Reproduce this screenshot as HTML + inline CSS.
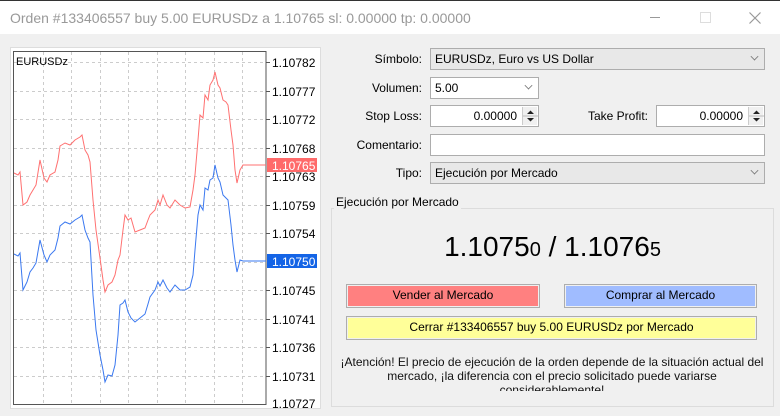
<!DOCTYPE html>
<html><head><meta charset="utf-8">
<style>
*{margin:0;padding:0;box-sizing:border-box}
body{width:780px;height:416px;overflow:hidden;background:#f0f0f0;font-family:"Liberation Sans",sans-serif;font-size:12px;color:#000;position:relative}
.title{position:absolute;left:0;top:0;width:780px;height:34px;background:#fff;border-top:1px solid #333}
.title span{position:absolute;left:10px;top:9px;font-size:14px;color:#999}
.abs{position:absolute}
.lbl{position:absolute;text-align:right;width:120px;font-size:12px}
.box{position:absolute;border:1px solid #adadad;background:#fff;height:22px;font-size:12px;padding:3px 4px}
.combo{background:#e8e8e8}
.chev{position:absolute;right:6px;top:4px;width:7px;height:7px;border-right:1px solid #777;border-bottom:1px solid #777;transform:rotate(45deg) scale(.8)}
.spin{position:absolute;right:1px;top:1px;width:15px;height:18px;background:#f0f0f0;border-left:1px solid #ccc}
.btn{position:absolute;border:1px solid #adadad;text-align:center;font-size:12px;line-height:19px}
.btn div{position:absolute;left:1px;top:1px;right:1px;bottom:1px}
</style></head><body>
<div class="title"><span>Orden #133406557 buy 5.00 EURUSDz a 1.10765 sl: 0.00000 tp: 0.00000</span>
<div class="abs" style="left:650px;top:16px;width:10px;height:1px;background:#999"></div>
<div class="abs" style="left:700px;top:11px;width:11px;height:11px;border:1px solid #ddd"></div>
<svg class="abs" style="left:749px;top:11px" width="12" height="12"><path d="M0.5 0.5L11.5 11.5M11.5 0.5L0.5 11.5" stroke="#999" stroke-width="1.2"/></svg>
</div>

<div class="abs" style="left:10px;top:47px;width:311px;height:362px;background:#fff;border:1px solid #ddd"></div>
<svg class="abs" style="left:0;top:0" width="330" height="416">
<rect x="13.5" y="51.5" width="252.5" height="353" fill="none" stroke="#555" stroke-width="1"/>
<g stroke="#ccc" stroke-dasharray="3,3" stroke-width="1">
<line x1="43.5" y1="52" x2="43.5" y2="404"/><line x1="71.5" y1="52" x2="71.5" y2="404"/><line x1="100.5" y1="52" x2="100.5" y2="404"/><line x1="128.5" y1="52" x2="128.5" y2="404"/><line x1="157.5" y1="52" x2="157.5" y2="404"/><line x1="185.5" y1="52" x2="185.5" y2="404"/><line x1="214.5" y1="52" x2="214.5" y2="404"/><line x1="242.5" y1="52" x2="242.5" y2="404"/>
<line x1="14" y1="62.5" x2="266" y2="62.5"/><line x1="14" y1="91.5" x2="266" y2="91.5"/><line x1="14" y1="119.5" x2="266" y2="119.5"/><line x1="14" y1="148.5" x2="266" y2="148.5"/><line x1="14" y1="176.5" x2="266" y2="176.5"/><line x1="14" y1="205.5" x2="266" y2="205.5"/><line x1="14" y1="233.5" x2="266" y2="233.5"/><line x1="14" y1="262.5" x2="266" y2="262.5"/><line x1="14" y1="290.5" x2="266" y2="290.5"/><line x1="14" y1="319.5" x2="266" y2="319.5"/><line x1="14" y1="347.5" x2="266" y2="347.5"/><line x1="14" y1="376.5" x2="266" y2="376.5"/>
</g>
<g stroke="#555"><line x1="266" y1="62.5" x2="270" y2="62.5"/><line x1="266" y1="91.5" x2="270" y2="91.5"/><line x1="266" y1="119.5" x2="270" y2="119.5"/><line x1="266" y1="148.5" x2="270" y2="148.5"/><line x1="266" y1="176.5" x2="270" y2="176.5"/><line x1="266" y1="205.5" x2="270" y2="205.5"/><line x1="266" y1="233.5" x2="270" y2="233.5"/><line x1="266" y1="290.5" x2="270" y2="290.5"/><line x1="266" y1="319.5" x2="270" y2="319.5"/><line x1="266" y1="347.5" x2="270" y2="347.5"/><line x1="266" y1="376.5" x2="270" y2="376.5"/></g>
<polyline fill="none" stroke="#ff7070" stroke-width="1" points="14,173 18,175 20,172 23,205 27,202 30,195 33,190 36,185 40,160 44,178 47,182 50,175 55,172 58,160 60,146 65,143 70,145 75,140 80,137 82,135 85,150 88,155 90,162 93,200 96,230 100,258 103,280 105,292 108,285 112,282 115,275 118,260 120,255 123,230 125,215 128,220 131,218 135,232 140,230 145,228 148,220 150,215 155,210 158,200 160,205 163,195 167,205 170,208 175,200 180,205 185,208 190,207 193,190 195,175 198,140 200,115 203,118 205,95 208,100 210,85 213,80 215,72 218,85 220,88 223,100 226,102 228,105 231,130 233,145 235,170 237,183 240,170 243,165 266,165"/>
<polyline fill="none" stroke="#3a78f0" stroke-width="1" points="14,254 18,256 20,253 23,290 27,282 30,272 33,268 36,263 40,240 44,255 47,262 50,255 55,250 58,238 60,226 65,222 70,224 75,220 80,217 82,215 85,230 88,238 90,242 93,295 96,330 100,355 103,370 105,382 108,375 112,376 115,365 118,335 120,305 123,303 125,300 128,312 131,318 135,322 140,318 145,314 148,304 150,297 155,290 158,282 160,286 163,280 167,288 170,292 175,285 180,290 185,290 190,287 193,275 195,250 198,215 200,205 203,210 205,188 208,190 210,180 213,178 215,165 218,178 220,182 223,195 226,198 228,200 231,225 233,245 235,260 237,272 240,260 243,261 266,261"/>
<rect x="267" y="158" width="50" height="14" fill="#ff6a6a"/>
<rect x="267" y="254" width="50" height="14" fill="#1464e6"/>
<g font-family="Liberation Sans,sans-serif" font-size="12" fill="#000">
<text x="16" y="65" font-size="11">EURUSDz</text>
<text x="272" y="67">1.10782</text><text x="272" y="96">1.10777</text><text x="272" y="124">1.10772</text><text x="272" y="153">1.10768</text><text x="272" y="181">1.10763</text><text x="272" y="210">1.10759</text><text x="272" y="238">1.10754</text><text x="272" y="295">1.10745</text><text x="272" y="324">1.10741</text><text x="272" y="352">1.10736</text><text x="272" y="381">1.10731</text><text x="272" y="408">1.10727</text>
<text x="272" y="170" fill="#fff">1.10765</text><text x="272" y="266" fill="#fff">1.10750</text>
</g>
</svg>

<div class="lbl" style="left:302px;top:52px">Símbolo:</div>
<div class="box combo" style="left:430px;top:48px;width:335px">EURUSDz, Euro vs US Dollar<span class="chev"></span></div>
<div class="lbl" style="left:302px;top:81px">Volumen:</div>
<div class="box" style="left:430px;top:77px;width:109px">5.00<span class="chev"></span></div>
<div class="lbl" style="left:302px;top:109px">Stop Loss:</div>
<div class="box" style="left:430px;top:105px;width:109px;text-align:right;padding-right:21px">0.00000<div class="spin"><svg width="15" height="18"><path d="M4 7 L7.5 3.5 L11 7Z M4 11 L7.5 14.5 L11 11Z" fill="#222"/><line x1="0" y1="9" x2="15" y2="9" stroke="#bbb"/></svg></div></div>
<div class="lbl" style="left:528px;top:109px">Take Profit:</div>
<div class="box" style="left:656px;top:105px;width:109px;text-align:right;padding-right:21px">0.00000<div class="spin"><svg width="15" height="18"><path d="M4 7 L7.5 3.5 L11 7Z M4 11 L7.5 14.5 L11 11Z" fill="#222"/><line x1="0" y1="9" x2="15" y2="9" stroke="#bbb"/></svg></div></div>
<div class="lbl" style="left:302px;top:138px">Comentario:</div>
<div class="box" style="left:430px;top:134px;width:335px"></div>
<div class="lbl" style="left:302px;top:166px">Tipo:</div>
<div class="box combo" style="left:430px;top:162px;width:335px">Ejecución por Mercado<span class="chev"></span></div>

<div class="abs" style="left:331px;top:208px;width:443px;height:199px;border:1px solid #dcdcdc"></div>
<div class="abs" style="left:334px;top:195px;background:#f0f0f0;padding:0 2px;font-size:12px">Ejecución por Mercado</div>
<div class="abs" style="left:331px;top:230px;width:443px;text-align:center;font-size:28px;line-height:34px;font-family:'Liberation Sans',sans-serif">1.1075<span style="font-size:20px">0</span> / 1.1076<span style="font-size:20px">5</span></div>
<div class="btn" style="left:346px;top:284px;width:194px;height:24px"><div style="background:#ff8080">Vender al Mercado</div></div>
<div class="btn" style="left:564px;top:284px;width:193px;height:24px"><div style="background:#a0bcff">Comprar al Mercado</div></div>
<div class="btn" style="left:346px;top:316px;width:411px;height:24px"><div style="background:#ffff99">Cerrar #133406557 buy 5.00 EURUSDz por Mercado</div></div>
<div class="abs" style="left:336px;top:355px;width:432px;height:36px;overflow:hidden;text-align:center;font-size:12px;line-height:14px;color:#111">¡Atención! El precio de ejecución de la orden depende de la situación actual del mercado, ¡la diferencia con el precio solicitado puede variarse considerablemente!</div>
</body></html>
